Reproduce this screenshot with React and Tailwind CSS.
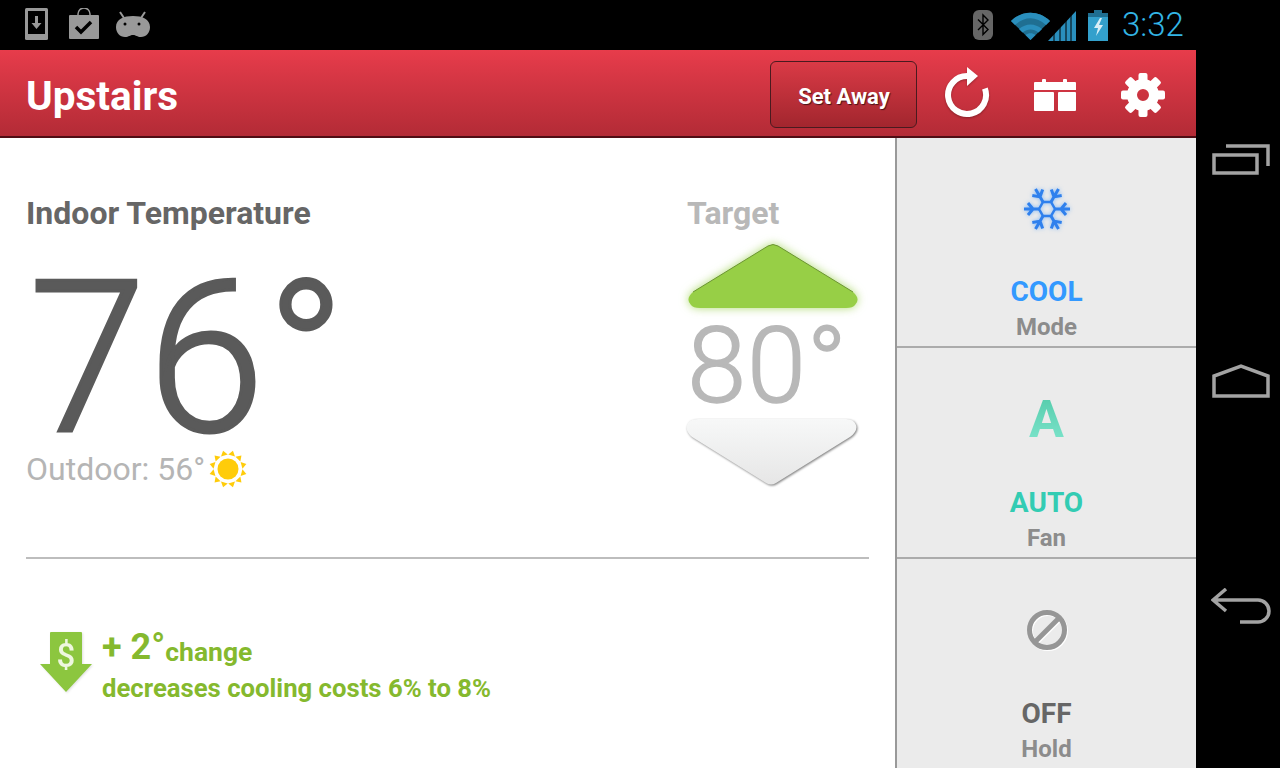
import React from 'react';

const FONT = { fontFamily: 'Roboto, sans-serif' };

const StatusLeft = () => (
  <div className="flex items-center">
    <svg width="24" height="34" viewBox="0 0 24 34" className="ml-[25px]">
      <rect x="0" y="0" width="23" height="32" rx="1.5" fill="#999" />
      <rect x="3" y="3" width="17" height="23" fill="#000" />
      <path d="M10 8h3v7h3.5l-5 6-5-6H10z" fill="#999" />
    </svg>
    <svg width="32" height="32" viewBox="0 0 32 32" className="mb-[3px] ml-[19px]">
      <path d="M10 8V6a6 6 0 0 1 12 0v2" fill="none" stroke="#999" strokeWidth="1.5" />
      <rect x="1" y="7" width="30" height="24" rx="1" fill="#999" />
      <path d="M8 19l5 5 10-10" fill="none" stroke="#000" strokeWidth="3.5" />
    </svg>
    <svg width="36" height="28" viewBox="0 0 36 28" className="ml-[15px]">
      <path d="M5 1l4 6M30 1l-4 6" stroke="#999" strokeWidth="2" />
      <path d="M1 16C1 8 9 5 18 5s17 3 17 11c0 6-4 10-9 10-4 0-5-2-8-2s-4 2-8 2c-5 0-9-4-9-10z" fill="#999" />
      <circle cx="10" cy="13" r="1.5" fill="#000" />
      <circle cx="24" cy="13" r="1.5" fill="#000" />
    </svg>
  </div>
);

const StatusRight = () => (
  <div className="flex items-center">
    <svg width="20" height="30" viewBox="0 0 20 30">
      <rect width="20" height="30" rx="6" fill="#666" />
      <path d="M5 9.500l10 10-5 5V5l5 5-10 10" fill="none" stroke="#000" strokeWidth="1.4" />
    </svg>
    <svg width="39" height="30" viewBox="0 0 39 30" className="ml-[18px]">
      <path d="M0 11C11 0 28 0 39 11L19.500 30z" fill="#1f6f92" />
      <path d="M0 11C11 0 28 0 39 11l-4 4C25 6 14 6 4 15z" fill="#2a8fbd" />
      <path d="M8 19c7-6 16-6 23 0l-3.500 3.500c-5-4-11-4-16 0z" fill="#2a8fbd" />
      <path d="M14.500 25c3-2.500 7-2.500 10 0l-5 5z" fill="#2a8fbd" />
    </svg>
    <svg width="28" height="31" viewBox="0 0 28 31" className="-ml-[2px]">
      <path d="M0 31L28 1V31z" fill="#2a8fbd" />
      <path d="M6 0V31M12 0V31M18 0V31M23 0V31" stroke="#000" strokeWidth="1" />
    </svg>
    <svg width="20" height="31" viewBox="0 0 20 31" className="ml-[12px]">
      <path d="M6 0h8v3h6v28H0V3h6z" fill="#33a0cc" />
      <path d="M6 0h8v3h6v4H0V3h6z" fill="#1f6f92" />
      <path d="M12 8l-6 10h4l-2 8 7-11h-4l3-7z" fill="#d8eef7" />
    </svg>
    <span style={FONT} className="ml-[14px] w-[74px] text-[33px] font-light leading-[38px] text-[#33b5e5]">3:32</span>
  </div>
);

const RefreshIcon = () => (
  <svg width="46" height="60" viewBox="0 0 46 60" className="drop-shadow-[0_1px_1px_rgba(0,0,0,0.3)]">
    <path d="M40.900 23.500A19 19 0 1 1 23 11" fill="none" stroke="#fff" strokeWidth="6" />
    <path d="M23 2l11 9-11 10z" fill="#fff" />
  </svg>
);

const CalendarIcon = () => (
  <svg width="42" height="32" viewBox="0 0 42 32">
    <path d="M1 3h7V1.500a2 2 0 0 1 4 0V3h17V1.500a2 2 0 0 1 4 0V3h8a1 1 0 0 1 1 1v7H0V4a1 1 0 0 1 1-1z" fill="#fff" />
    <rect x="0" y="13" width="20" height="19" rx="1" fill="#fff" />
    <rect x="24" y="13" width="18" height="19" rx="1" fill="#fff" />
  </svg>
);

const GearIcon = () => (
  <svg width="44" height="44" viewBox="0 0 44 44">
    {[0, 45, 90, 135, 180, 225, 270, 315].map(a => (
      <rect key={a} x="17.500" y="0" width="9" height="12" rx="2" fill="#fff" transform={`rotate(${a} 22 22)`} />
    ))}
    <circle cx="22" cy="22" r="11" fill="none" stroke="#fff" strokeWidth="10" />
  </svg>
);

const Sun = () => (
  <svg width="38" height="38" viewBox="0 0 38 38" className="ml-[4px]">
    {[15, 45, 75, 105, 135, 165, 195, 225, 255, 285, 315, 345].map(a => (
      <path key={a} d="M19 0l3.500 5h-7z" fill="#ffcc0a" transform={`rotate(${a} 19 19)`} />
    ))}
    <circle cx="19" cy="19" r="10.500" fill="#ffcc0a" />
  </svg>
);

const ArrowUp = () => (
  <svg width="180" height="76" viewBox="0 0 180 76" className="ml-[4px] mt-[6px] drop-shadow-[0_0_5px_rgba(150,205,70,0.75)]">
    <path d="M85 7Q90 4 95 7L170 53Q178 60 172 66Q170 69 163 69H17Q10 69 8 66Q2 60 10 53z" fill="#97cf46" />
    <path d="M10 53L85 7Q90 4 95 7L170 53" fill="none" stroke="#6b9432" strokeWidth="1" />
  </svg>
);

const ArrowDown = () => (
  <svg width="176" height="72" viewBox="0 0 176 72" className="ml-[2px] drop-shadow-[1px_1px_1px_rgba(0,0,0,0.5)]">
    <defs>
      <linearGradient id="downFill" x1="0" y1="0" x2="0" y2="1">
        <stop offset="0" stopColor="#f7f8f8" />
        <stop offset="1" stopColor="#e6e6e6" />
      </linearGradient>
    </defs>
    <path d="M14 2H162Q170 2 172 8Q174 14 166 20L92 66Q87 69 82 66L8 20Q1 14 3 8Q5 2 14 2z" fill="url(#downFill)" />
  </svg>
);

const SavingsArrow = () => (
  <svg width="52" height="62" viewBox="0 0 52 62" className="drop-shadow-[1px_1px_1px_rgba(0,0,0,0.12)]">
    <path d="M11 0h30a1 1 0 0 1 1 1v31h10L26 60 0 32h10V1a1 1 0 0 1 1-1z" fill="#8cc63f" />
    <text x="26" y="35" textAnchor="middle" fontFamily="Roboto, sans-serif" fontWeight="500" fontSize="33" fill="#eef7df">$</text>
  </svg>
);

const Snowflake = () => (
  <svg width="52" height="52" viewBox="0 0 52 52" className="drop-shadow-[0_0_2px_rgba(60,150,255,0.6)]">
    <path d="M18 26l4-7h8l4 7-4 7h-8z" fill="none" stroke="#2f80ed" strokeWidth="2.500" />
    {[0, 60, 120, 180, 240, 300].map(a => (
      <path key={a} d="M34 26H49M40 26l5-6M40 26l5 6" fill="none" stroke="#2f80ed" strokeWidth="3" transform={`rotate(${a} 26 26)`} />
    ))}
  </svg>
);

const FanIcon = () => (
  <span style={FONT} className="bg-gradient-to-b from-[#4fc9a8] to-[#82e8d0] bg-clip-text text-[52px] font-bold leading-[60px] text-transparent">A</span>
);

const OffIcon = () => (
  <svg width="42" height="42" viewBox="0 0 42 42" className="-mt-[2px] drop-shadow-[1px_1px_0_#fff]">
    <circle cx="21" cy="21" r="17.500" fill="none" stroke="#969696" strokeWidth="5" />
    <path d="M9 33L33 9" stroke="#969696" strokeWidth="5" />
  </svg>
);

const SideCell = ({ icon, value, valueClass, label, first, last }) => (
  <div className={`flex flex-col items-center ${first ? 'h-[210px]' : 'h-[211px]'} ${last ? '' : 'border-b-2 border-[#ababab]'}`}>
    <div className={`flex items-center justify-center ${first ? 'h-[137px] pt-[5px]' : 'h-[138px] pt-[6px]'}`}>{icon}</div>
    <div className={`text-[28px] font-bold leading-[34px] ${valueClass}`}>{value}</div>
    <div className="text-[24px] font-bold leading-[37px] text-[#8c8c8c]">{label}</div>
  </div>
);

const NavBar = () => (
  <div className="flex w-[84px] flex-col items-center bg-black pt-[144px] pl-[5px]">
    <svg width="58" height="32" viewBox="0 0 58 32">
      <path d="M14 2H56V22" fill="none" stroke="#a3a3a3" strokeWidth="3.500" />
      <rect x="2" y="11" width="43" height="18" fill="none" stroke="#a3a3a3" strokeWidth="3.500" />
    </svg>
    <svg width="58" height="34" viewBox="0 0 58 34" className="mt-[188px]">
      <path d="M2 32V12L29 2l27 10v20z" fill="none" stroke="#a3a3a3" strokeWidth="3.500" />
    </svg>
    <svg width="62" height="36" viewBox="0 0 62 36" className="mt-[190px] ml-[3px]">
      <path d="M15 1L2 12l13 11M2 12h45a11 11 0 0 1 0 22H29" fill="none" stroke="#a3a3a3" strokeWidth="3.500" />
    </svg>
  </div>
);

export default function App() {
  return (
    <div style={FONT} className="flex h-[768px] w-[1280px] overflow-hidden bg-black">
      <div className="flex w-[1196px] flex-col">
        <div className="flex h-[50px] items-center justify-between bg-black">
          <StatusLeft />
          <StatusRight />
        </div>

        <header className="flex h-[88px] items-center border-b-2 border-[#4f0d14] bg-gradient-to-b from-[#e73c4b] to-[#b32b36] pt-[4px] pl-[26px]">
          <h1 className="pt-[2px] text-[40.500px] font-bold text-white">Upstairs</h1>
          <button
            type="button"
            className="mb-[2px] ml-auto h-[67px] w-[147px] rounded-md border border-[#4a1a1f] bg-gradient-to-b from-[#da3a46] to-[#a2262e] pt-[4px] pl-[1px] text-[22px] font-bold text-white [text-shadow:1px_1px_1px_rgba(0,0,0,0.6)]"
          >
            Set Away
          </button>
          <div className="ml-[27px] flex w-[46px] justify-center"><RefreshIcon /></div>
          <div className="ml-[44px]"><CalendarIcon /></div>
          <div className="mr-[31px] ml-[45px]"><GearIcon /></div>
        </header>

        <div className="flex flex-1 bg-white">
          <main className="flex-1 px-[26px]">
            <div className="flex h-[421px] justify-between border-b-2 border-[#bdbdbd] pt-[55px]">
              <div>
                <h2 className="text-[32px] font-bold leading-[40px] text-[#666666]">Indoor Temperature</h2>
                <div className="mt-[36px] ml-[3px] text-[211px] leading-[180px] font-light tracking-[1.500px] text-[#5a5a5a] [-webkit-text-stroke:3px_#5a5a5a]">76°</div>
                <div className="flex items-center text-[32px] leading-[40px] font-normal text-[#b5b5b5]">
                  Outdoor: 56°
                  <Sun />
                </div>
              </div>
              <div className="mr-[8px] flex w-[180px] flex-col items-center">
                <div className="w-full pl-[6px] text-[32px] font-bold leading-[40px] text-[#b8b8b8]">Target</div>
                <ArrowUp />
                <div className="mr-[7px] text-[106px] font-light leading-[102px] tracking-[1px] text-[#b8b8b8] [-webkit-text-stroke:1.500px_#b8b8b8]">80°</div>
                <ArrowDown />
              </div>
            </div>
            <div className="flex items-start pt-[73px] pl-[14px]">
              <SavingsArrow />
              <div className="-mt-[2px] ml-[10px] font-bold text-[#85b92e]">
                <div className="flex items-start">
                  <span className="text-[36px] leading-[34px]">+ 2°</span>
                  <span className="text-[26.500px] leading-[44px]">change</span>
                </div>
                <div className="-mt-[3px] text-[25.700px] leading-[34px]">decreases cooling costs 6% to 8%</div>
              </div>
            </div>
          </main>

          <aside className="h-[630px] w-[301px] border-l-2 border-[#999999] bg-[#ebebeb]">
            <SideCell icon={<Snowflake />} value="COOL" valueClass="text-[#3399ff]" label="Mode" first />
            <SideCell icon={<FanIcon />} value="AUTO" valueClass="text-[#33ccb3]" label="Fan" />
            <SideCell icon={<OffIcon />} value="OFF" valueClass="text-[#666666]" label="Hold" last />
          </aside>
        </div>
      </div>
      <NavBar />
    </div>
  );
}
